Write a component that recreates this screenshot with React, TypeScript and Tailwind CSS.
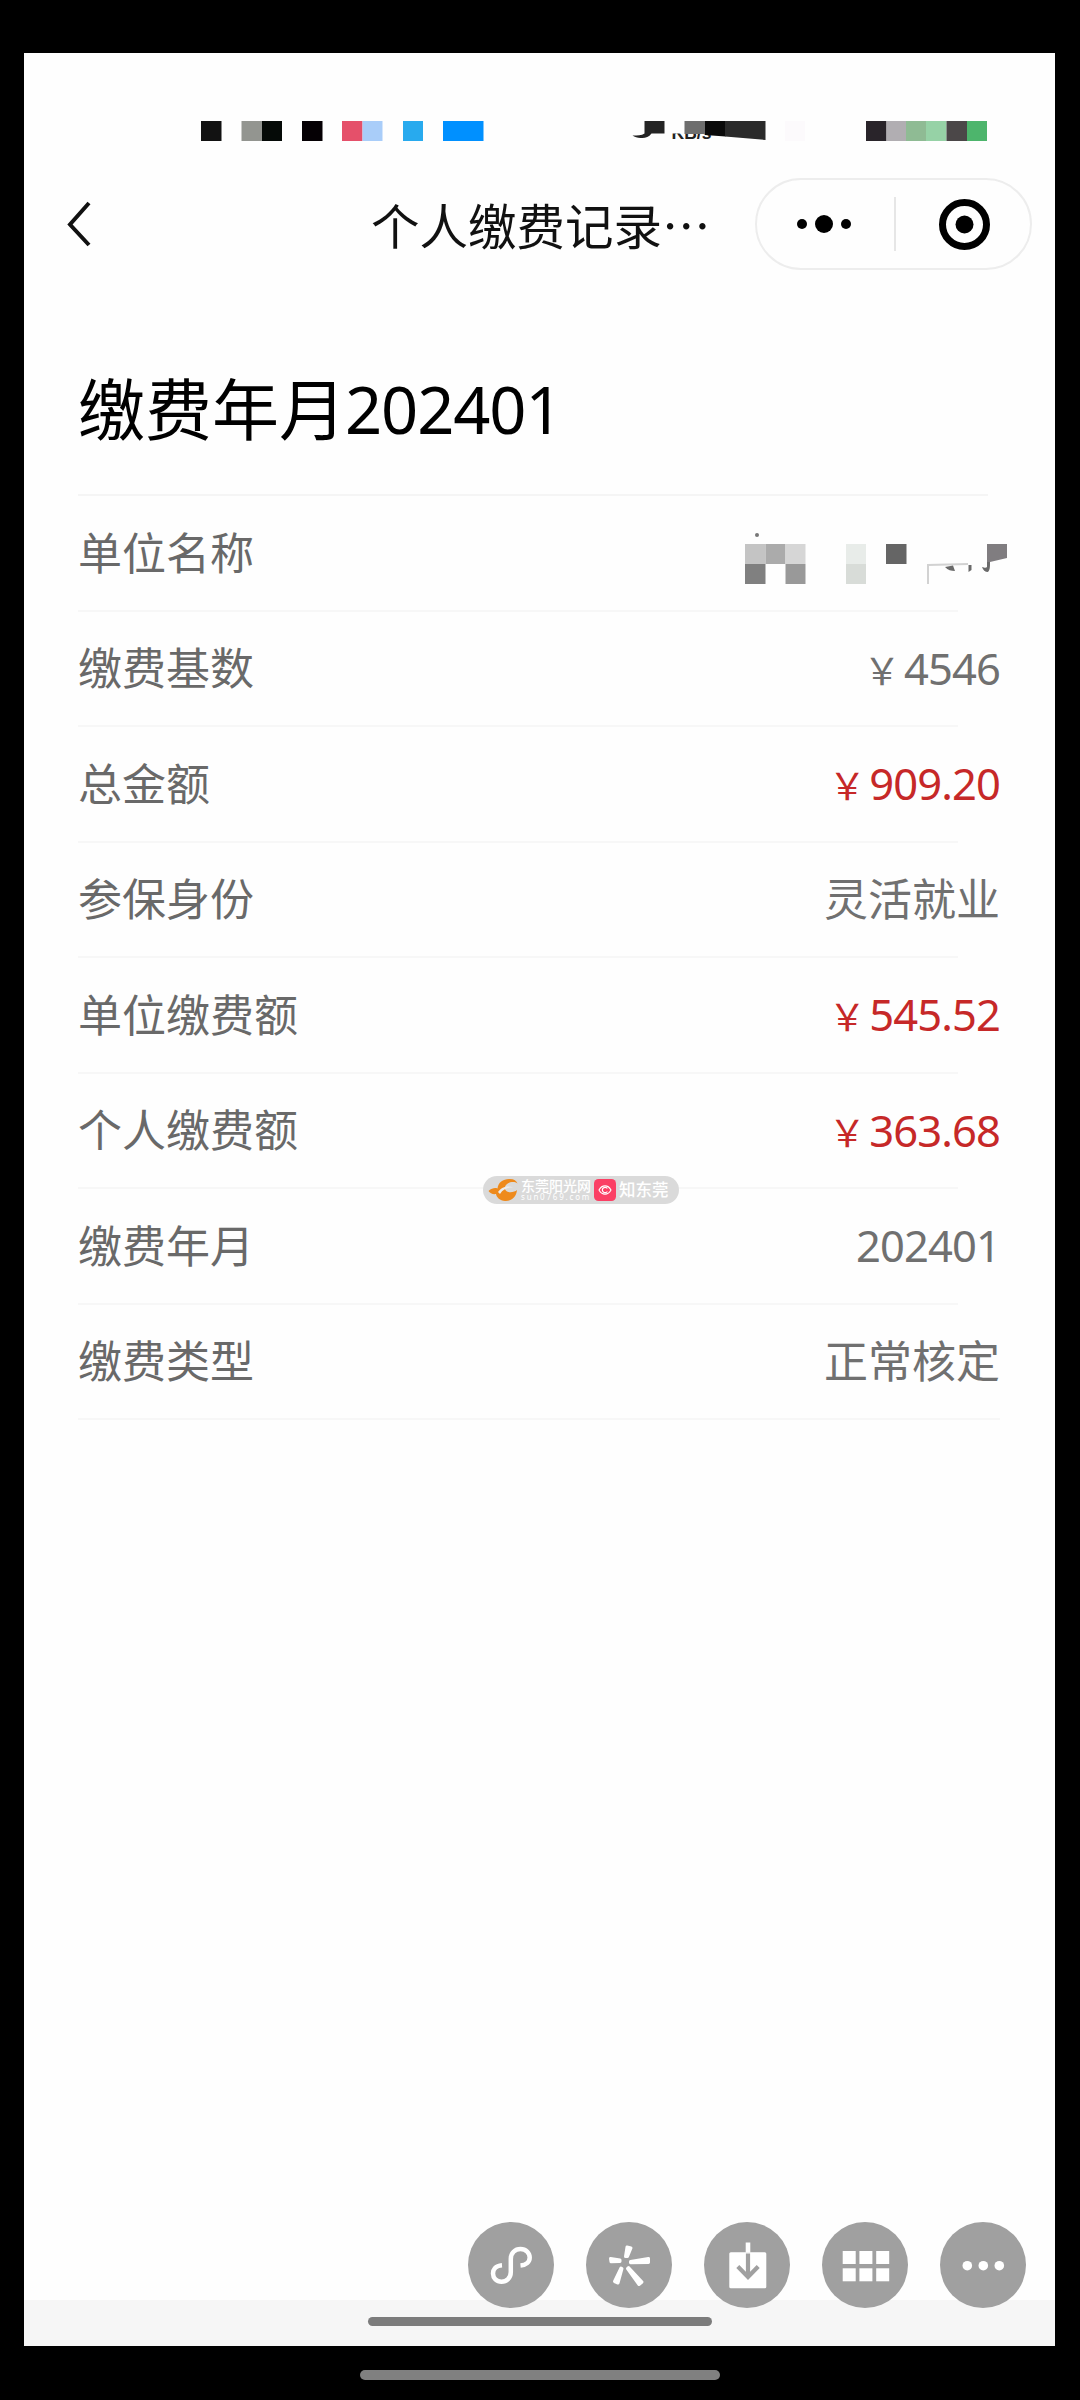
import React from 'react';

interface RecordRow {
  label: string;
  value?: string;
  currency?: boolean;
  tone?: 'normal' | 'amount';
  lineClass: string;
}

const rows: RecordRow[] = [
  { label: '单位名称', lineClass: 'w-[880px]' },
  { label: '缴费基数', value: '4546', currency: true, lineClass: 'w-[880px]' },
  { label: '总金额', value: '909.20', currency: true, tone: 'amount', lineClass: 'w-[880px]' },
  { label: '参保身份', value: '灵活就业', lineClass: 'w-[880px]' },
  { label: '单位缴费额', value: '545.52', currency: true, tone: 'amount', lineClass: 'w-[880px]' },
  { label: '个人缴费额', value: '363.68', currency: true, tone: 'amount', lineClass: 'w-[880px]' },
  { label: '缴费年月', value: '202401', lineClass: 'w-[880px]' },
  { label: '缴费类型', value: '正常核定', lineClass: 'w-[922px]' },
];

// Masked status bar, x starts at the first block
const StatusBar: React.FC = () => (
  <svg className="ml-[177px] block h-[24px] w-[790px]" viewBox="201 119 790 24">
    <defs>
      <clipPath id="speed">
        <rect x="670" y="133.5" width="45" height="10" />
      </clipPath>
    </defs>
    <rect x="201" y="121" width="20.5" height="20" fill="#121212" />
    <rect x="241.5" y="121" width="20.5" height="20" fill="#939590" />
    <rect x="262" y="121" width="20" height="20" fill="#050a07" />
    <rect x="302" y="121" width="20.5" height="20" fill="#050004" />
    <rect x="342" y="121" width="20.5" height="20" fill="#e5506a" />
    <rect x="362.5" y="121" width="20" height="20" fill="#a9cdf9" />
    <rect x="403" y="121" width="20" height="20" fill="#28aaee" />
    <rect x="443" y="121" width="40.5" height="20" fill="#0090ff" />
    <path d="M644.5 121h20v12.5h-13c-3 4-7 5-11 4.500c-3 0-6-1-8-2.500c5 0 9 0 12-2z" fill="#242424" />
    <text x="671.5" y="139" fontSize="17.500" fontWeight="700" fill="#222" clipPath="url(#speed)" fontFamily="Liberation Sans, sans-serif">
      KB/s
    </text>
    <rect x="684.5" y="121" width="20.5" height="13" fill="#6d6d6d" />
    <path d="M705 121h20.5v15.5l-20.5-1.500z" fill="#0a0a0a" />
    <path d="M725 121h40.5v19l-40.5-3.500z" fill="#2a2a2a" />
    <rect x="785" y="121" width="20" height="20" fill="#fcfafc" />
    <rect x="866" y="121" width="20.5" height="20" fill="#29242a" />
    <rect x="886.5" y="121" width="20" height="20" fill="#b1aeb2" />
    <rect x="906" y="121" width="20.5" height="20" fill="#8fbb94" />
    <rect x="926" y="121" width="20.5" height="20" fill="#96d2a6" />
    <rect x="946.5" y="121" width="20.5" height="20" fill="#4b4748" />
    <rect x="967" y="121" width="20" height="20" fill="#4db56c" />
  </svg>
);

const MaskedName: React.FC = () => (
  <svg className="mr-[-7px] mt-[10px] block h-[56px] w-[262px]" viewBox="745 530 262 56">
    <circle cx="757" cy="535" r="2" fill="#777" />
    <rect x="745" y="544" width="20.5" height="20" fill="#c4c4c4" />
    <rect x="765.5" y="544" width="20" height="20" fill="#ababab" />
    <rect x="785.5" y="544" width="20" height="20" fill="#d6d6d6" />
    <rect x="745" y="564" width="20.5" height="20" fill="#808080" />
    <rect x="785.5" y="564" width="20" height="20" fill="#999999" />
    <rect x="846" y="544" width="20" height="20" fill="#e8ece9" />
    <rect x="846" y="564" width="20" height="20" fill="#d8dcd8" />
    <rect x="886" y="544" width="20.5" height="20" fill="#656565" />
    <path d="M928 584v-19l40-1" fill="none" stroke="#d2d2d2" strokeWidth="2" />
    <path d="M945 567l8-1.500 2 5.500c-4 0-7-1-10-4zM968.500 565h3v5l-3 2zM982 567c3 1 4 1 5 0v-5h3c0 5 0 8-2 10c-3 0-5-2-6-5z" fill="#6a6a6a" />
    <path d="M987 544h20v14l-17 4h-3z" fill="#807d80" />
  </svg>
);

const ToolButton: React.FC<{ children: React.ReactNode }> = ({ children }) => (
  <button className="size-[86px] shrink-0 rounded-full bg-[#a0a0a0]">
    <svg viewBox="0 0 86 86" className="size-full" fill="none">
      {children}
    </svg>
  </button>
);

const Watermark: React.FC = () => (
  <div className="absolute left-[483px] top-[1176px] flex h-[28px] w-[196px] items-center rounded-full bg-[#dadada] pl-[5px] text-white">
    <svg viewBox="0 0 30 24" className="h-[24px] w-[30px] shrink-0">
      <path d="M0.500 13C4 10 7 9.500 9.500 10.500C10 4 16 0.500 22 1C26 1 28.500 3 29.500 5.500C26 3 21 4 18.500 6.500C16 9 16.500 12 19 13.500C22 15 27 14 29 12C28.500 19 23 23.500 17 23C12 22.500 8.500 19.500 8 16C5 16.500 2 15.500 0.500 13Z" fill="#ee8a1c" />
      <path d="M10 14C14 8 21 7.500 25 9.500C20 9 15 11 12 16Z" fill="#ececec" />
    </svg>
    <div className="ml-[3px] w-[70px] shrink-0">
      <div className="text-[14px] font-medium leading-[14px]">东莞阳光网</div>
      <div className="text-[8px] leading-[8px] tracking-[1.8px]">sun0769.com</div>
    </div>
    <svg viewBox="0 0 22 22" className="ml-[3px] size-[22px] shrink-0">
      <rect width="22" height="22" rx="4.500" fill="#fb3f64" />
      <path d="M5 11C8 5.500 14 5.500 17 11C14 16.500 8 16.500 5 11Z" fill="none" stroke="#fff" strokeWidth="1.100" />
      <path d="M13.300 9.500A2.700 2.700 0 1 0 13.300 12.500" fill="none" stroke="#fff" strokeWidth="1.200" />
    </svg>
    <div className="ml-[3px] shrink-0 text-[16.5px] font-medium leading-[20px]">知东莞</div>
  </div>
);

export default function App() {
  return (
    <div className="flex h-[2400px] w-[1080px] flex-col bg-black pl-[24px] pt-[53px] font-['Noto_Sans','Noto_Sans_CJK_SC',sans-serif]" lang="zh-CN">
      <div className="flex h-[2293px] w-[1031px] flex-col bg-[#fefefe]">
        <div className="pt-[66px]">
          <StatusBar />
        </div>

        {/* Navigation */}
        <header className="mt-[35px] flex h-[92px] items-center">
          <svg viewBox="0 0 26 48" className="ml-[42px] h-[48px] w-[26px] shrink-0" fill="none">
            <path d="M23 3L4 24.500L23 45" stroke="#111" strokeWidth="4" />
          </svg>
          <h1 className="ml-[279px] w-[384px] shrink-0 whitespace-nowrap font-['Noto_Sans_CJK_SC',sans-serif] text-[48.5px] leading-[88px] text-[#111]">
            个人缴费记录…
          </h1>
          <div className="flex h-[92px] w-[277px] shrink-0 items-center rounded-full border-2 border-[#ededed]">
            <svg viewBox="0 0 137 88" className="h-[88px] w-[137px]">
              <circle cx="45" cy="44" r="5" />
              <circle cx="67" cy="44" r="9" />
              <circle cx="89" cy="44" r="5" />
            </svg>
            <div className="h-[54px] w-[2px] bg-[#e6e6e6]" />
            <svg viewBox="0 0 134 88" className="h-[88px] w-[134px]">
              <circle cx="68.500" cy="44.500" r="22" fill="none" stroke="#000" strokeWidth="7" />
              <circle cx="68.500" cy="44.500" r="9" />
            </svg>
          </div>
        </header>

        {/* Payment record */}
        <main className="flex-1 pl-[54px]">
          <div className="flex h-[224px] items-center pt-[54px] text-[67px] leading-none text-black">
            <span className="w-[267px] whitespace-nowrap">缴费年月</span>
            <span className="text-[65px] tracking-[-1.1px]">202401</span>
          </div>
          <div className="h-[2px] w-[910px] bg-[#f5f5f5]" />
          {rows.map((row) => (
            <div key={row.label} className="flex h-[115.5px] w-[922px] flex-col">
              <div className={`flex flex-1 items-center justify-between whitespace-nowrap text-[44px] leading-none ${row.tone === 'amount' ? 'text-[#c62828]' : 'text-[#707070]'}`}>
                <span className="text-[#696969]">{row.label}</span>
                {row.value ? (
                  <span className="flex items-baseline">
                    {row.currency && <span className="w-[44px] text-center text-[37px]">￥</span>}
                    <span className={/\d/.test(row.value) ? 'text-[43.5px] tracking-[-0.9px]' : ''}>{row.value}</span>
                  </span>
                ) : (
                  <MaskedName />
                )}
              </div>
              <div className={`h-[2px] bg-[#f7f7f7] ${row.lineClass}`} />
            </div>
          ))}
        </main>

        {/* Floating tools overlap the gesture area */}
        <div className="z-10 mb-[-8px] flex justify-end gap-[32px] pr-[29px]">
          <ToolButton>
            <path
              d="M34 43.300C27 43.800 25 48 25 51.500C25 56 28.500 59.700 33.500 59.700C38.500 59.700 42.800 56 42.800 50V37C42.800 31 47 27 52.500 27C58 27 61.700 31 61.700 35.500C61.700 40 58 43 52.500 43.500"
              stroke="#fff"
              strokeWidth="4.500"
            />
          </ToolButton>
          <ToolButton>
            <g fill="#fff" stroke="#fff" strokeWidth="3" strokeLinejoin="round">
              <path d="M41 25L45 26L41.500 34.500L39.500 34.500Z" />
              <path d="M24.500 36.500L34 38L34 39.500L25 39.800Z" />
              <path d="M62.500 36.500L62.500 40.500L44.500 40.800L44.500 39.500Z" />
              <path d="M28.500 59.500L32 61L36 46.500L35 46Z" />
              <path d="M53 62.500L56 60L42.500 45.500L41.500 46.500Z" />
            </g>
          </ToolButton>
          <ToolButton>
            <rect x="25.300" y="30.300" width="37" height="36" rx="1.500" fill="#fff" />
            <path d="M44 20.500V30.500" stroke="#fff" strokeWidth="4.600" />
            <path d="M44 31.500V55M33.800 44.500L44 55L54.200 44.500" stroke="#a0a0a0" strokeWidth="4.200" />
          </ToolButton>
          <ToolButton>
            {[20.7, 37.4, 54.2].map((x) => (
              <React.Fragment key={x}>
                <rect x={x} y="29" width="13" height="13" fill="#fff" />
                <rect x={x} y="46.300" width="13" height="13" fill="#fff" />
              </React.Fragment>
            ))}
          </ToolButton>
          <ToolButton>
            <circle cx="27.300" cy="43.700" r="4.800" fill="#fff" />
            <circle cx="43.300" cy="43.700" r="4.800" fill="#fff" />
            <circle cx="59.300" cy="43.700" r="4.800" fill="#fff" />
          </ToolButton>
        </div>
        <div className="flex h-[46px] justify-center bg-[#f6f6f6] pt-[17px]">
          <div className="h-[9px] w-[344px] rounded-full bg-[#7c7c7c]" />
        </div>
      </div>
      <div className="ml-[336px] mt-[24px] h-[10px] w-[360px] rounded-full bg-[#808080]" />
      <Watermark />
    </div>
  );
}
